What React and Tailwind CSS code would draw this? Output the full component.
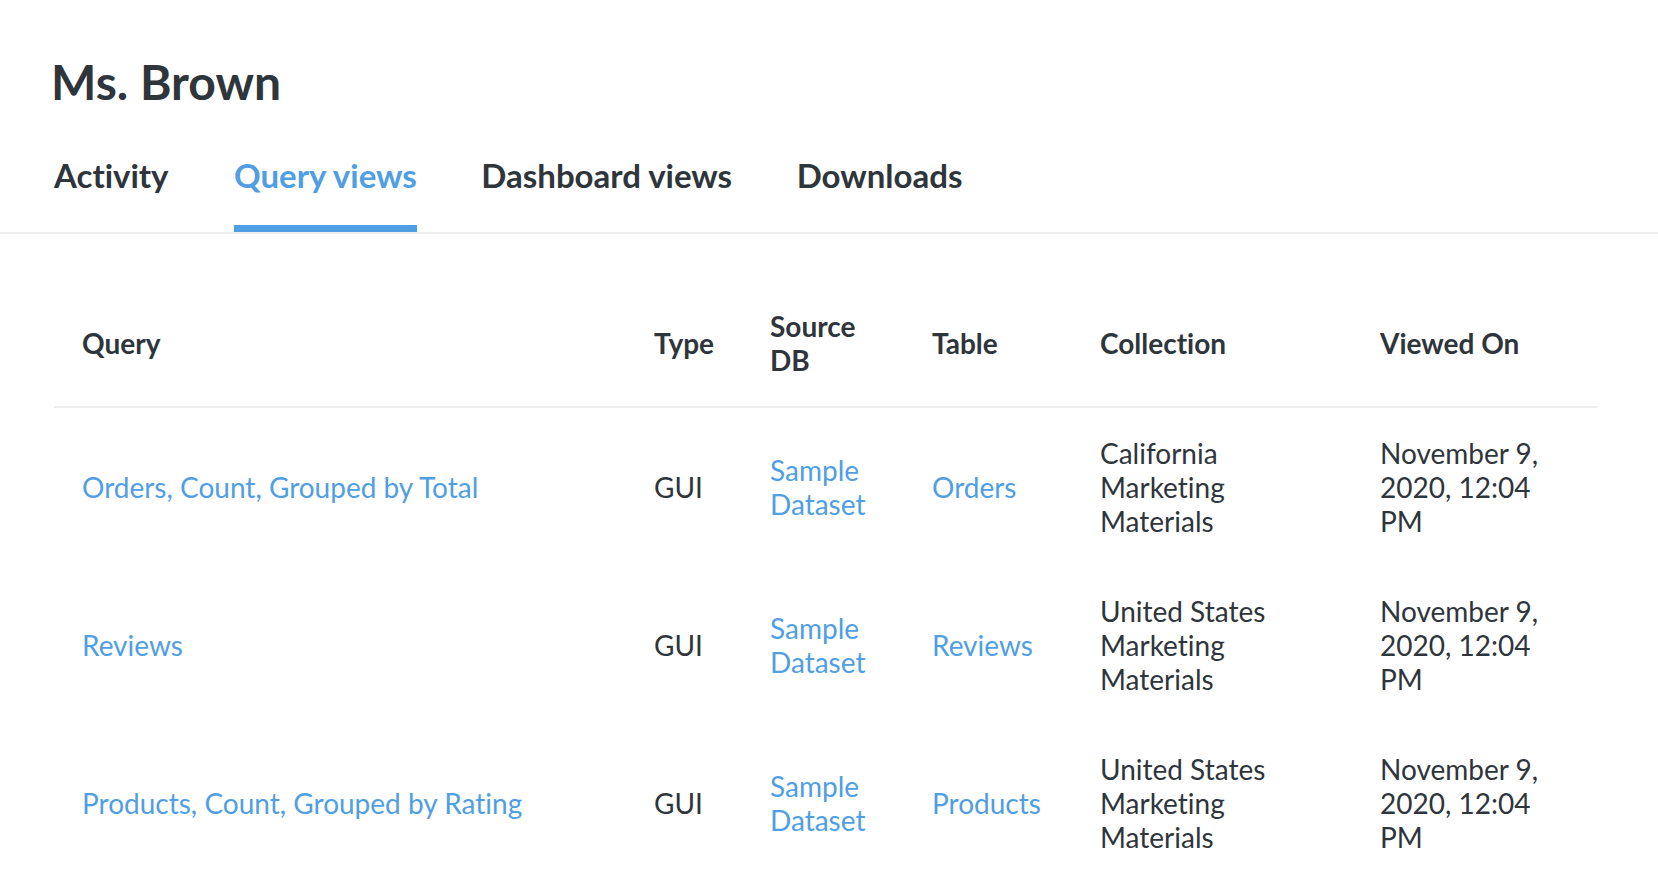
const rows = [
  ["Orders, Count, Grouped by Total", "Orders", "California Marketing Materials"],
  ["Reviews", "Reviews", "United States Marketing Materials"],
  ["Products, Count, Grouped by Rating", "Products", "United States Marketing Materials"],
];
const tabs = ["Activity", "Query views", "Dashboard views", "Downloads"];
const heads = ["Query", "Type", "Source DB", "Table", "Collection", "Viewed On"];

export default function App() {
  return (
    <div className="h-[896px] overflow-hidden bg-white font-['Lato',sans-serif] text-[#2e353b] [font-variant-ligatures:none]">
      <h1 className="pl-[51px] pt-[52px] text-[48px] leading-[60px] font-bold">Ms. Brown</h1>
      <nav className="mt-[34px] flex h-[88px] gap-[64.5px] border-b-2 border-[#eeeeee] pl-[54px]">
        {tabs.map((t, i) => (
          <div key={t} className={"pt-[9px] text-[33px] leading-[40px] font-bold " + (i === 0 ? "mr-[1px] " : "") + (i === 1 ? "border-b-[7px] border-[#509ee3] text-[#509ee3]" : "")}>{t}</div>
        ))}
      </nav>
      <div className="mt-[46px] px-[54px] w-[1652px]">
        <table className="w-[1544px] table-fixed border-collapse text-[28px] leading-[34px]">
          <colgroup>
            <col className="w-[572px]" />
            <col className="w-[116px]" />
            <col className="w-[162px]" />
            <col className="w-[168px]" />
            <col className="w-[280px]" />
            <col className="w-[246px]" />
          </colgroup>
          <thead>
            <tr className="border-b-2 border-[#eeeeee]">
              {heads.map((h) => (
                <th key={h} className="px-[28px] py-[29px] text-left font-bold">{h}</th>
              ))}
            </tr>
          </thead>
          <tbody>
            {rows.map((r) => (
              <tr key={r[0]}>
                <td className="px-[28px] py-[28px] text-[#509ee3]">{r[0]}</td>
                <td className="px-[28px] py-[28px]">GUI</td>
                <td className="px-[28px] py-[28px] text-[#509ee3]">Sample Dataset</td>
                <td className="px-[28px] py-[28px] text-[#509ee3]">{r[1]}</td>
                <td className="px-[28px] py-[28px]">{r[2]}</td>
                <td className="px-[28px] py-[28px]">November 9, 2020, 12:04 PM</td>
              </tr>
            ))}
          </tbody>
        </table>
      </div>
    </div>
  );
}
